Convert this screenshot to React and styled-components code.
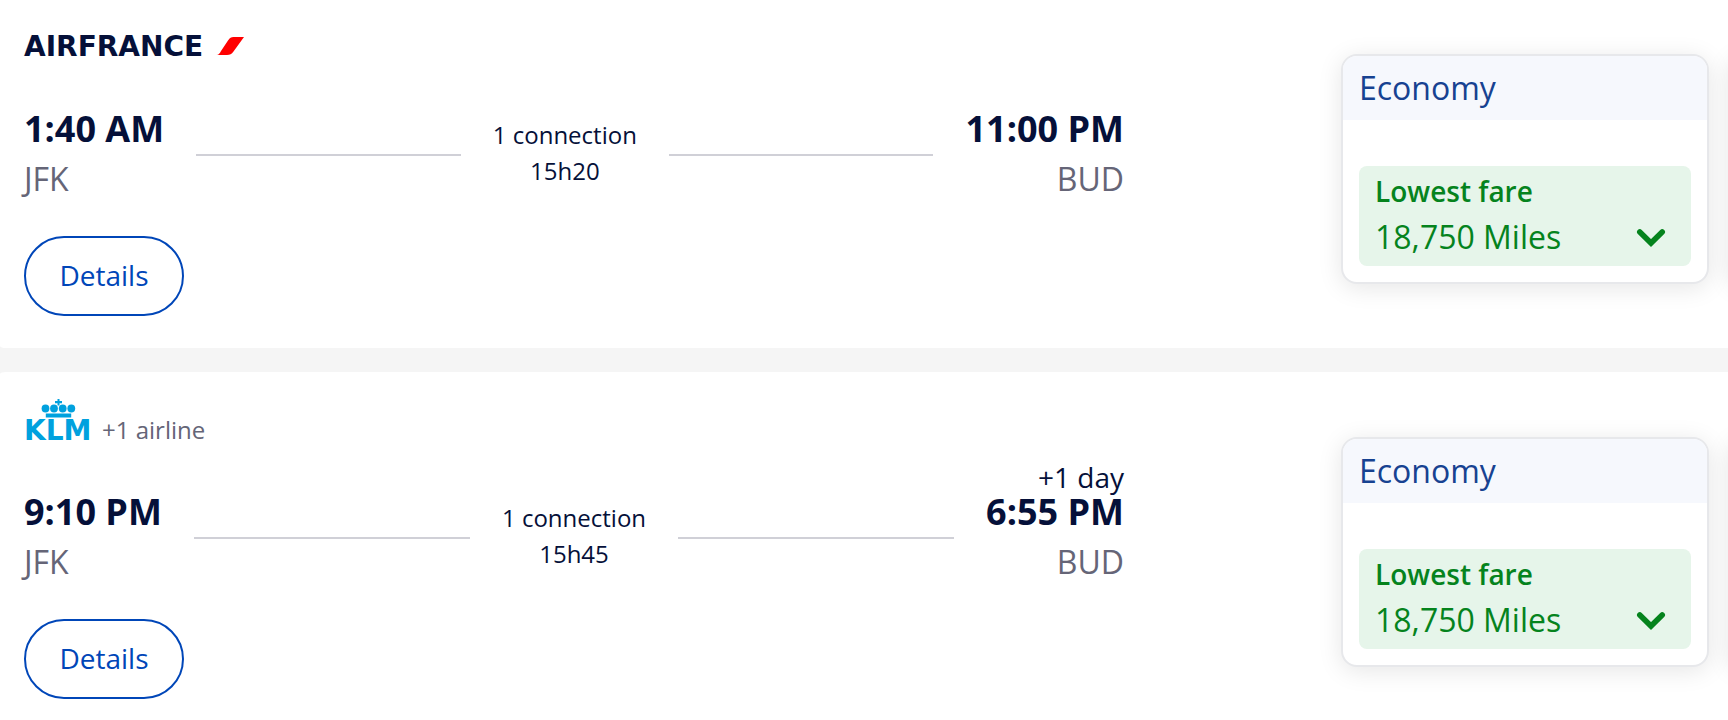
import React from "react";
import styled, { createGlobalStyle } from "styled-components";

const GlobalStyle = createGlobalStyle`
  *, *::before, *::after { box-sizing: border-box; }
  body {
    margin: 0;
    background: #f5f5f5;
    color: #051039;
    font-family: "Open Sans", "Noto Sans", sans-serif;
  }
`;

const Results = styled.main`
  display: flex;
  flex-direction: column;
  gap: 24px;
  min-height: 100vh;
`;

const Flight = styled.article`
  display: flex;
  padding: 24px 0 32px 24px;
  overflow: hidden;
  background: #fff;
  border-radius: 6px 0 0 6px / 2px 0 0 2px;

  &:first-child {
    padding-top: 13px;
    border-top-left-radius: 0;
  }

  &:last-child {
    flex: 1;
    padding-bottom: 20px;
    border-bottom-left-radius: 0;
  }
`;

const Journey = styled.div`
  flex: 1;
  min-width: 0;
  margin-right: 217px;
`;

const Carrier = styled.header`
  display: flex;
  align-items: flex-end;
  gap: 8px;
  height: 44px;

  svg {
    display: block;
    overflow: visible;
  }
`;

const Partners = styled.span`
  color: #656577;
  font-size: 24px;
  line-height: 20px;
`;

const LogoText = styled.text`
  fill: ${(p) => p.$color};
  font-family: "DejaVu Sans", sans-serif;
  font-size: 28px;
  font-weight: 700;
`;

const Schedule = styled.div`
  display: flex;
  align-items: flex-end;
  gap: 32px;
  min-height: 122px;
  margin-top: 20px;
`;

const Stop = styled.div`
  display: flex;
  flex-direction: column;
  text-align: ${(p) => p.$align};
  white-space: nowrap;
`;

const DayShift = styled.span`
  font-size: 28px;
  line-height: 34px;
`;

const Time = styled.time`
  font-size: 36px;
  font-weight: 700;
  line-height: 36px;
`;

const Airport = styled.span`
  margin-top: 12px;
  color: #656577;
  font-size: 32px;
  line-height: 40px;
`;

const Route = styled.div`
  display: flex;
  flex: 1;
  align-items: center;
  gap: 32px;
  padding-bottom: 6px;
`;

const Line = styled.span`
  flex: 1;
  height: 2px;
  background: #d0d0d7;
`;

const RouteInfo = styled.div`
  margin-bottom: 4px;
  font-size: 24px;
  line-height: 36px;
  text-align: center;
  white-space: nowrap;
`;

const DetailsButton = styled.button`
  display: block;
  width: 160px;
  height: 80px;
  margin-top: 37px;
  padding: 0 0 2px;
  border: 2px solid #0046b8;
  border-radius: 40px;
  background: #fff;
  color: #0046b8;
  font: 500 28px "Open Sans", "Noto Sans", sans-serif;
  cursor: pointer;
`;

const Fares = styled.div`
  display: flex;
  gap: 20px;
  width: 387px;
  margin-top: 41px;
  align-self: flex-start;
`;

const FareCard = styled.section`
  flex: 0 0 368px;
  border: 2px solid #e7e8eb;
  border-radius: 16px;
  background: #fff;
  box-shadow: 0 4px 24px rgba(0, 0, 0, 0.1);
`;

const CabinName = styled.h2`
  margin: 0;
  padding: 0 16px;
  border-radius: 14px 14px 0 0;
  background: #f6f8fd;
  color: #174291;
  font-size: 32px;
  font-weight: 400;
  line-height: 64px;
`;

const FareButton = styled.button`
  display: flex;
  align-items: flex-end;
  justify-content: space-between;
  width: calc(100% - 32px);
  margin: 46px 16px 16px;
  padding: 2px 24px 6px 16px;
  border: 0;
  border-radius: 8px;
  background: #e6f5ea;
  color: #05831d;
  font-family: inherit;
  text-align: left;
  cursor: pointer;

  svg {
    margin-bottom: 10px;
  }
`;

const FareText = styled.span`
  display: flex;
  flex-direction: column;
  font-size: 32px;
  line-height: 46px;
`;

const FareLabel = styled.strong`
  font-size: 28px;
  font-weight: 600;
`;

function AirFranceLogo() {
  return (
    <svg width="222" height="22" viewBox="0 0 222 22" role="img" aria-label="Air France">
      <LogoText x="0" y="21" $color="#051039">AIRFRANCE</LogoText>
      <path
        d="M192.500 20C195 19.800 195.500 18.500 197 16L204 5.500C206 2.800 207 2 209.500 2H220L209.500 16.500C207.500 19.300 206 20 203 20Z"
        fill="#ff0000"
      />
    </svg>
  );
}

function KlmLogo() {
  return (
    <svg width="70" height="41" viewBox="0 0 70 41" role="img" aria-label="KLM">
      <g fill="#00a1de">
        <path d="M33.500 0h2v2h2.500v2.300h-2.500V6.500h-2V4.300H31V2h2.500z" />
        <circle cx="21.500" cy="9.500" r="3.900" />
        <circle cx="30" cy="9.500" r="3.900" />
        <circle cx="38.700" cy="9.500" r="3.900" />
        <circle cx="47.300" cy="9.500" r="3.900" />
        <path d="M21.800 14.500h25.400v4H21.800z" />
      </g>
      <LogoText x="0" y="41" $color="#00a1de">KLM</LogoText>
    </svg>
  );
}

function Chevron() {
  return (
    <svg width="32" height="24" viewBox="0 0 32 24" fill="none" aria-hidden="true">
      <path d="M4.800 6L16 17L27.200 6" stroke="currentColor" strokeWidth="5.600" strokeLinecap="round" />
    </svg>
  );
}

const flights = [
  { id: "af", Logo: AirFranceLogo, from: "1:40 AM", to: "11:00 PM", duration: "15h20" },
  { id: "klm", Logo: KlmLogo, partners: "+1 airline", from: "9:10 PM", to: "6:55 PM", shift: "+1 day", duration: "15h45" },
];

export default function App() {
  return (
    <>
      <GlobalStyle />
      <Results>
        {flights.map(({ id, Logo, partners, from, to, shift, duration }) => (
          <Flight key={id}>
            <Journey>
              <Carrier>
                <Logo />
                {partners && <Partners>{partners}</Partners>}
              </Carrier>
              <Schedule>
                <Stop $align="left">
                  <Time>{from}</Time>
                  <Airport>JFK</Airport>
                </Stop>
                <Route>
                  <Line />
                  <RouteInfo>
                    <div>1 connection</div>
                    <div>{duration}</div>
                  </RouteInfo>
                  <Line />
                </Route>
                <Stop $align="right">
                  {shift && <DayShift>{shift}</DayShift>}
                  <Time>{to}</Time>
                  <Airport>BUD</Airport>
                </Stop>
              </Schedule>
              <DetailsButton type="button">Details</DetailsButton>
            </Journey>
            <Fares>
              <FareCard>
                <CabinName>Economy</CabinName>
                <FareButton type="button">
                  <FareText>
                    <FareLabel>Lowest fare</FareLabel>
                    <span>18,750 Miles</span>
                  </FareText>
                  <Chevron />
                </FareButton>
              </FareCard>
              <FareCard aria-hidden="true" />
            </Fares>
          </Flight>
        ))}
      </Results>
    </>
  );
}
